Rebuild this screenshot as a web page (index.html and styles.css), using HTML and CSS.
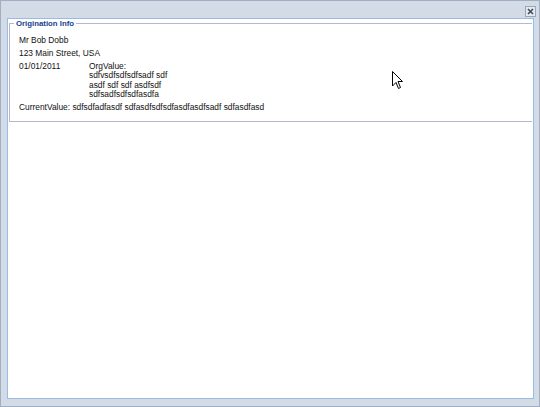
FILE: index.html
```html
<!DOCTYPE html>
<html>
<head>
  <title>Origination Info</title>
  <meta charset="UTF-8" />
  <link rel="stylesheet" href="styles.css">
</head>
<body>
  <div class="window">
    <div class="header">
      <span class="close">
        <svg width="11" height="11" viewBox="0 0 11 11">
          <rect x="0.5" y="0.5" width="10" height="10" fill="#e4e9f1" stroke="#9aa6b6"/>
          <path d="M3 3 L8 8 M8 3 L3 8" stroke="#3f4a5a" stroke-width="1.6"/>
        </svg>
      </span>
    </div>
    <div class="body">
      <fieldset class="info">
        <legend>Origination Info</legend>
        <div class="line">Mr Bob Dobb</div>
        <div class="line">123 Main Street, USA</div>
        <div class="row">
          <div class="date">01/01/2011</div>
          <div class="org">
            OrgValue:<br>
            sdfvsdfsdfsdfsadf sdf<br>
            asdf sdf sdf asdfsdf<br>
            sdfsadfsdfsdfasdfa
          </div>
        </div>
        <div class="current">CurrentValue: sdfsdfadfasdf sdfasdfsdfsdfasdfasdfsadf sdfasdfasd</div>
      </fieldset>
    </div>
  </div>

  <svg class="cursor" width="12" height="19" viewBox="0 0 12 19">
    <path d="M0.5 0.5 L0.5 15 L4 11.5 L6.5 17.5 L8.5 16.5 L6 10.5 L10.5 10.5 Z" fill="#fff" stroke="#000" stroke-width="1"/>
  </svg>
</body>
</html>
```

FILE: styles.css
```css
body {
  margin: 0;
  font-family: "Liberation Sans", Arial, sans-serif;
  font-size: 8.4px;
  color: #111;
  background: #fff;
}
.window {
  box-sizing: border-box;
  width: 540px;
  height: 407px;
  border: 1px solid #a1afc3;
  background: #d3dbe6;
  padding: 0 5px 7px 6px;
  display: flex;
  flex-direction: column;
}
.header {
  height: 17px;
  display: flex;
  justify-content: flex-end;
  align-items: center;
}
.close {
  display: flex;
  margin-top: 3px;
  margin-right: -2px;
}
.body {
  flex: 1;
  background: #fff;
  border: 1px solid #99bbe8;
  padding: 0 1px;
}
.info {
  margin: 0;
  border: 1px solid #b5b8c8;
  border-right: none;
  padding: 6px 9px 7px 9px;
}
.info legend {
  font-weight: bold;
  font-size: 7.8px;
  line-height: 9px;
  color: #15428b;
  padding: 0 2px;
  margin-left: -5px;
}
.line {
  line-height: 13px;
}
.row {
  display: flex;
  margin-top: 2px;
  line-height: 9.4px;
}
.date {
  width: 70px;
}
.current {
  margin-top: 1px;
  line-height: 13px;
}
.cursor {
  position: absolute;
  left: 392px;
  top: 71px;
}
```
